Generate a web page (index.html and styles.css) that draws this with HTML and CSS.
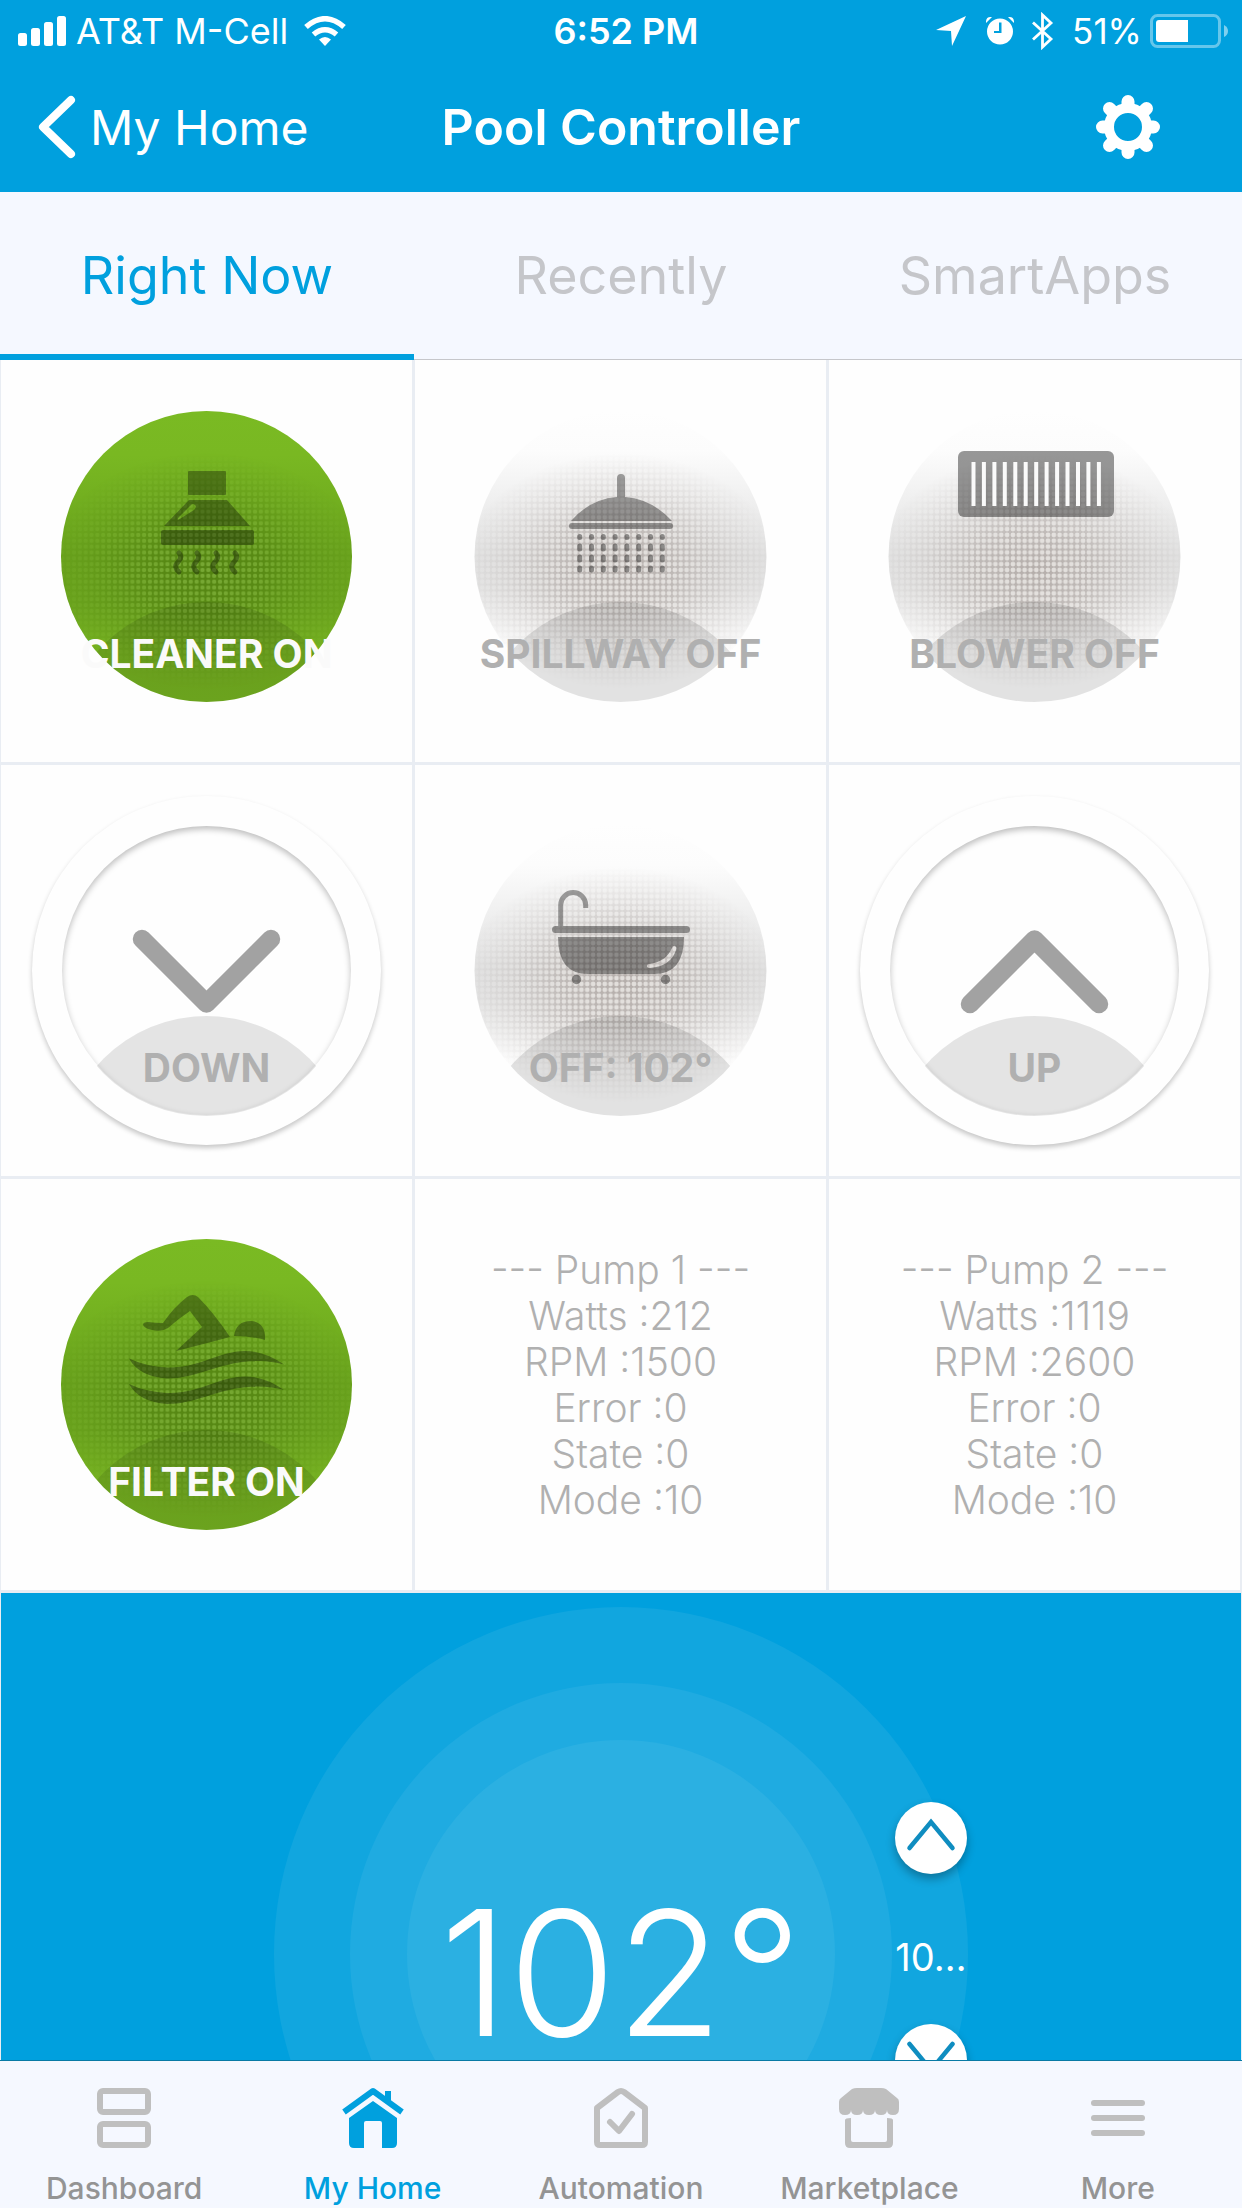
FILE: index.html
```html
<!DOCTYPE html>
<html lang="en">
<head>
<meta charset="utf-8">
<meta name="viewport" content="width=device-width, initial-scale=1">
<title>Pool Controller</title>
<link rel="stylesheet" href="styles.css">
</head>
<body>
<svg class="defs" aria-hidden="true">
  <defs>
    <linearGradient id="on-base" x1="0" y1="0" x2="0" y2="1">
      <stop offset="0" stop-color="#7aba23"/><stop offset=".15" stop-color="#79b822"/>
      <stop offset=".5" stop-color="#6aa41d"/><stop offset=".66" stop-color="#6ca61e"/><stop offset=".82" stop-color="#76b221"/>
      <stop offset="1" stop-color="#78b622"/>
    </linearGradient>
    <linearGradient id="off-base" x1="0" y1="0" x2="0" y2="1">
      <stop offset="0" stop-color="#fefefe"/><stop offset=".14" stop-color="#fcfcfc"/>
      <stop offset=".5" stop-color="#e1e1e1"/><stop offset=".6" stop-color="#e4e4e4"/><stop offset=".82" stop-color="#fefefe"/>
      <stop offset="1" stop-color="#fefefe"/>
    </linearGradient>
    <pattern id="on-dots" width="5.84" height="5.84" patternUnits="userSpaceOnUse">
      <rect width="5.84" height="5.84" fill="#4f7d10"/><circle cx="2.9" cy="2.9" r="2.2" fill="#79a838"/>
    </pattern>
    <pattern id="off-dots" width="5.84" height="5.84" patternUnits="userSpaceOnUse">
      <rect width="5.84" height="5.84" fill="#aba39f"/><circle cx="2.9" cy="2.9" r="2.4" fill="#e2deda"/>
    </pattern>
    <radialGradient id="fade" gradientUnits="userSpaceOnUse" cx="0" cy="0" r="1" gradientTransform="translate(205.5 220) scale(160 118)">
      <stop offset="0" stop-color="#fff" stop-opacity=".85"/><stop offset=".35" stop-color="#fff" stop-opacity=".65"/><stop offset=".7" stop-color="#fff" stop-opacity=".25"/><stop offset="1" stop-color="#fff" stop-opacity="0"/>
    </radialGradient>
    <mask id="dot-mask"><rect width="411" height="411" fill="url(#fade)"/></mask>
    <clipPath id="disc-clip"><circle cx="205.5" cy="205.5" r="145.5"/></clipPath>
    <g id="disc-on">
      <circle cx="205.5" cy="205.5" r="145.5" fill="url(#on-base)"/>
      <g clip-path="url(#disc-clip)">
        <rect width="411" height="411" fill="url(#on-dots)" mask="url(#dot-mask)"/>
        <circle cx="205.5" cy="396.5" r="145.5" fill="#000" opacity=".1"/>
      </g>
    </g>
    <g id="disc-off">
      <circle cx="205.5" cy="205.5" r="146" fill="url(#off-base)"/>
      <g clip-path="url(#disc-clip)">
        <rect width="411" height="411" fill="url(#off-dots)" mask="url(#dot-mask)"/>
        <circle cx="205.5" cy="396.5" r="145.5" fill="#000" opacity=".11"/>
      </g>
    </g>
  </defs>
</svg>

<div class="app">
  <header class="header">
    <div class="status">
      <div class="status-left">
        <svg width="48" height="30" viewBox="0 0 48 30" fill="#fff" aria-hidden="true"><rect y="17" width="9" height="13" rx="2.5"/><rect x="13" y="12" width="9" height="18" rx="2.5"/><rect x="26" y="6" width="9" height="24" rx="2.5"/><rect x="39" width="9" height="30" rx="2.5"/></svg>
        <span class="carrier">AT&amp;T M-Cell</span>
        <svg width="42" height="30" viewBox="0 0 42 30" aria-hidden="true"><path fill="#fff" d="M21 30l-6-6.500q6-5 12 0z"/><path fill="none" stroke="#fff" stroke-width="5.5" d="M9.500 18.500q11.500-9.500 23 0M2 11q19-16.500 38 0"/></svg>
      </div>
      <span class="time">6:52 PM</span>
      <div class="status-right">
        <svg class="arrow" width="30" height="30" viewBox="0 0 30 30" aria-hidden="true"><path fill="#fff" d="M30 0L16 30 15 15 0 14z"/></svg>
        <svg class="alarm" width="28" height="30" viewBox="0 0 28 30" aria-hidden="true"><path fill="#fff" fill-rule="evenodd" d="M14 2.500a13 13 0 1 1 0 26 13 13 0 0 1 0-26zm-1 4V15H8v2h7.500V6.500zM6 1L0 7Q-.5 0 6 1zM22 1l6 6q.5-7-6-6z"/></svg>
        <svg class="bluetooth" width="22" height="38" viewBox="0 0 22 38" aria-hidden="true"><path fill="none" stroke="#fff" stroke-width="2.800" d="M1 10.500L19 27 10.500 35V3L19 11 1 27.500"/></svg>
        <span class="percent">51%</span>
        <svg width="78" height="34" viewBox="0 0 78 34" aria-hidden="true"><rect x="1.500" y="1.500" width="68" height="31" rx="6" fill="none" stroke="#fff" stroke-opacity=".4" stroke-width="3"/><path fill="#fff" d="M9 6h29v22H9q-3 0-3-3V9q0-3 3-3z"/><path fill="#fff" fill-opacity=".5" d="M74 11q4 2 4 6t-4 6z"/></svg>
      </div>
    </div>
    <nav class="navbar">
      <a class="back" href="#home"><svg width="38" height="64" viewBox="0 0 38 64" aria-hidden="true"><path fill="none" stroke="#fff" stroke-width="8" stroke-linecap="round" stroke-linejoin="round" d="M33 5L5 32l28 27"/></svg>My Home</a>
      <h1 class="title">Pool Controller</h1>
      <button class="settings" type="button" aria-label="Settings"><svg width="64" height="64" viewBox="-32 -32 64 64" aria-hidden="true"><circle r="19" fill="none" stroke="#fff" stroke-width="10"/><g stroke="#fff" stroke-width="13" stroke-linecap="round"><path d="M0-25.500v4M0 25.500v-4M-25.500 0h4M25.500 0h-4M-18.500-18.500l3 3M18.500 18.500l-3-3M-18.500 18.500l3-3M18.500-18.500l-3 3"/></g></svg></button>
    </nav>
  </header>

  <nav class="tabs">
    <a class="tab tab-active" href="#now">Right Now</a>
    <a class="tab" href="#recently">Recently</a>
    <a class="tab" href="#smartapps">SmartApps</a>
  </nav>

  <main class="content">
    <div class="tiles">
      <button class="tile" type="button">
        <svg class="art" viewBox="0 0 411 411" aria-hidden="true"><use href="#disc-on"/>
          <g fill="#000" opacity=".32"><rect x="187" y="120" width="38" height="24" rx="1"/><path fill-rule="evenodd" d="M188 149h38l23 26h-86zm2 5l-12 12q-2 2-1 3l16-10q3-3 1-5t-4 0z"/><rect x="160" y="179" width="93" height="15" rx="2"/>
          <g fill="none" stroke="#000" stroke-width="5" stroke-linecap="round"><path d="M178 202q4 4-1 9t1 10M196 202q4 4-1 9t1 10M215 202q4 4-1 9t1 10M234 202q4 4-1 9t1 10"/></g></g></svg>
        <span class="label label-on">CLEANER ON</span>
      </button>
      <button class="tile" type="button">
        <svg class="art" viewBox="0 0 411 411" aria-hidden="true"><use href="#disc-off"/>
          <g fill="#000" opacity=".36"><path d="M202 146v-19q0-4 4-4t4 4v19q27 2 47 24H156q19-22 46-24z"/><rect x="154" y="172" width="104" height="6" rx="3"/></g>
          <g fill="none" stroke="#000" stroke-opacity=".38" stroke-width="5" stroke-linecap="round"><path d="M164.700 185.500v1M176.500 185.500v1M188.300 185.500v1M200.100 185.500v1M211.900 185.500v1M223.700 185.500v1M235.500 185.500v1M247.300 185.500v1M164.700 195v3M176.500 195v3M188.300 195v3M200.100 195v3M211.900 195v3M223.700 195v3M235.500 195v3M247.300 195v3M164.700 206v3M176.500 206v3M188.300 206v3M200.100 206v3M211.900 206v3M223.700 206v3M235.500 206v3M247.300 206v3M164.700 217v2M176.500 217v2M188.300 217v2M200.100 217v2M211.900 217v2M223.700 217v2M235.500 217v2M247.300 217v2"/></g></svg>
        <span class="label">SPILLWAY OFF</span>
      </button>
      <button class="tile" type="button">
        <svg class="art" viewBox="0 0 411 411" aria-hidden="true"><use href="#disc-off"/>
          <rect x="129" y="100" width="156" height="66" rx="6" fill="#000" opacity=".4"/>
          <path fill="none" stroke="#fafafa" stroke-width="4" d="M144.500 111v44M154.900 111v44M165.400 111v44M175.800 111v44M186.300 111v44M196.700 111v44M207.200 111v44M217.600 111v44M228.100 111v44M238.500 111v44M249 111v44M259.400 111v44M269.900 111v44"/></svg>
        <span class="label">BLOWER OFF</span>
      </button>

      <button class="tile" type="button">
        <span class="dial"><span class="well"></span></span>
        <svg class="art" viewBox="0 0 411 411" aria-hidden="true"><g clip-path="url(#disc-clip)"><circle cx="205.500" cy="396.500" r="145.500" fill="#000" opacity=".1"/></g>
          <path fill="none" stroke="#a2a2a2" stroke-width="18.500" stroke-linecap="round" stroke-linejoin="round" d="M141 174l64.500 64.500L270 174"/></svg>
        <span class="label">DOWN</span>
      </button>
      <button class="tile" type="button">
        <svg class="art" viewBox="0 0 411 411" aria-hidden="true"><use href="#disc-off"/>
          <g fill="#000" opacity=".38"><path fill-rule="evenodd" d="M143 172h126q0 37-30 37h-66q-30 0-30-37zm114 11q-6 14-23 16-2 0-2 2t3 2q21-2 26-18 1-3-1-4t-3 2z"/><rect x="137" y="161" width="138" height="7" rx="3.500"/><circle cx="161.500" cy="214.500" r="4.700"/><circle cx="250.500" cy="214.500" r="4.700"/></g>
          <path fill="none" stroke="#000" stroke-opacity=".36" stroke-width="5" d="M145.700 161v-21a12.500 12.500 0 0 1 25 0v3"/></svg>
        <span class="label">OFF: 102°</span>
      </button>
      <button class="tile" type="button">
        <span class="dial"><span class="well"></span></span>
        <svg class="art" viewBox="0 0 411 411" aria-hidden="true"><g clip-path="url(#disc-clip)"><circle cx="205.500" cy="396.500" r="145.500" fill="#000" opacity=".1"/></g>
          <path fill="none" stroke="#a2a2a2" stroke-width="18.500" stroke-linecap="round" stroke-linejoin="round" d="M141 239l64.500-64.500L270 239"/></svg>
        <span class="label">UP</span>
      </button>

      <button class="tile" type="button">
        <svg class="art" viewBox="0 0 411 411" aria-hidden="true"><use href="#disc-on"/>
          <g fill="#000" opacity=".32"><path d="M142 145q1-2 5-2 8 1 15 1 11-16 24-26 6-4 11 0 16 16 32 40-30 8-54 14l26-24-12-16q-12 8-22 17-6 4-16 2-9-2-9-6z"/><path d="M233 157q2-15 17-15 15 1 14 19-14-4-31-4z"/>
          <path id="wave" d="M128 179.500q17 8 38 9c32 1 50-16 78-16.500q20 0 39 13.500-17-5-37-3c-32 3-52 17-80 17q-28-2-38-20z"/><use href="#wave" y="25.500"/></g></svg>
        <span class="label label-on">FILTER ON</span>
      </button>
      <div class="tile readout"><p>--- Pump 1 ---<br>Watts :212<br>RPM :1500<br>Error :0<br>State :0<br>Mode :10</p></div>
      <div class="tile readout"><p>--- Pump 2 ---<br>Watts :1119<br>RPM :2600<br>Error :0<br>State :0<br>Mode :10</p></div>
    </div>

    <section class="thermostat" aria-label="Temperature">
      <div class="ring ring-outer"><div class="ring ring-middle"><div class="ring ring-inner"><span class="temperature">102°</span></div></div></div>
      <div class="setpoint">
        <button class="step" type="button" aria-label="Raise"><svg width="50" height="34" viewBox="0 0 50 34" aria-hidden="true"><path fill="none" stroke="#0f8dc0" stroke-width="4.500" stroke-linecap="round" d="M3.500 30L25 4l21.500 26"/></svg></button>
        <span class="target">10…</span>
        <button class="step" type="button" aria-label="Lower"><svg width="50" height="34" viewBox="0 0 50 34" aria-hidden="true"><path fill="none" stroke="#0f8dc0" stroke-width="4.500" stroke-linecap="round" d="M3.500 4L25 30 46.500 4"/></svg></button>
      </div>
    </section>
  </main>

  <nav class="bottom-bar">
    <a class="item" href="#dashboard"><svg width="64" height="62" viewBox="0 0 64 62" aria-hidden="true"><g fill="none" stroke="#bfbfbf" stroke-width="6"><rect x="8" y="4" width="48" height="21" rx="3"/><rect x="8" y="37" width="48" height="21" rx="3"/></g></svg>Dashboard</a>
    <a class="item item-active" href="#myhome"><svg width="64" height="62" viewBox="0 0 64 62" fill="#00a0de" aria-hidden="true"><path fill="none" stroke="#00a0de" stroke-width="6" stroke-linejoin="round" d="M3 25L32 4l29 21"/><path d="M44 4h6v12l-6-4zM32 14l24 17v25q0 5-5 5H41V36q0-2-2-2H25q-2 0-2 2v25H13q-5 0-5-5V31z"/></svg>My Home</a>
    <a class="item" href="#automation"><svg width="64" height="62" viewBox="0 0 64 62" aria-hidden="true"><g fill="none" stroke="#bfbfbf" stroke-width="6" stroke-linejoin="round"><path d="M8 21L29 5q3-2 6 0l21 16v34q0 3-3 3H11q-3 0-3-3z"/><path stroke-linecap="round" d="M21 35l9 9 13-17"/></g></svg>Automation</a>
    <a class="item" href="#marketplace"><svg width="64" height="62" viewBox="0 0 64 62" fill="#bfbfbf" aria-hidden="true"><path d="M15 2q2-1 5-1h24q3 0 5 1l11 9q2 1 2 4v7q0 6-6 6t-6-5q0 5-6 5t-6-5q0 5-6 5t-6-5q0 5-6 5t-6-5q0 5-6 5t-6-6v-7q0-3 2-4z"/><path d="M8 33q0-2 6-2v22q0 2 2 2h32q2 0 2-2V31q6 0 6 2v23q0 5-5 5H13q-5 0-5-5z"/></svg>Marketplace</a>
    <a class="item" href="#more"><svg width="64" height="62" viewBox="0 0 64 62" fill="#bfbfbf" aria-hidden="true"><rect x="5" y="13" width="54" height="6" rx="3"/><rect x="5" y="28" width="54" height="6" rx="3"/><rect x="5" y="43" width="54" height="6" rx="3"/></svg>More</a>
  </nav>
</div>
</body>
</html>
```
FILE: styles.css
```css
*,
*::before,
*::after {
  box-sizing: border-box;
}

body {
  margin: 0;
  font-family: Inter, "Liberation Sans", sans-serif;
  background: #fefefe;
}

button {
  margin: 0;
  padding: 0;
  border: 0;
  background: none;
  color: inherit;
  font: inherit;
}

a {
  color: inherit;
  text-decoration: none;
}

svg {
  display: block;
  flex: none;
}

.defs {
  position: absolute;
  width: 0;
  height: 0;
}

.app {
  display: flex;
  flex-direction: column;
  height: 100vh;
}

/* Header */

.header {
  flex: none;
  background: #00a0de;
  color: #fff;
}

.status {
  display: grid;
  grid-template-columns: 1fr auto 1fr;
  align-items: center;
  height: 62px;
  padding: 0 14px 0 18px;
  font-size: 36px;
}

.status-left,
.status-right {
  display: flex;
  align-items: center;
}

.status-right {
  justify-content: flex-end;
  font-size: 35px;
}

.carrier {
  margin: 0 16px 0 10px;
}

.time {
  padding-left: 6px;
  font-weight: 600;
}

.arrow {
  margin-right: 20px;
}

.alarm {
  margin-right: 18px;
}

.bluetooth {
  margin-right: 18px;
}

.percent {
  margin-right: 8px;
}

.navbar {
  display: grid;
  grid-template-columns: 1fr auto 1fr;
  align-items: center;
  height: 130px;
  padding: 0 38px;
  font-size: 48px;
}

.back {
  display: flex;
  align-items: center;
  gap: 14px;
}

.title {
  margin: 0;
  font-size: 50px;
  font-weight: 600;
}

.settings {
  justify-self: end;
  margin-right: 44px;
}

/* Section tabs */

.tabs {
  display: grid;
  grid-template-columns: repeat(3, 1fr);
  flex: none;
  height: 168px;
  background: #f5f8ff;
  position: relative;
  z-index: 1;
}

.tab {
  display: grid;
  place-items: center;
  border-bottom: 1px solid #c6c7cb;
  font-size: 52px;
  color: #c5c6ca;
}

.tab-active {
  border-bottom: 6px solid #00a0de;
  padding-top: 5px;
  color: #00a0de;
}

/* Device tiles */

.content {
  flex: 1;
  min-height: 0;
  overflow: hidden;
}

.tiles {
  display: grid;
  grid-template-columns: repeat(3, 1fr);
  margin-top: -10px;
}

.tile {
  display: grid;
  place-items: center;
  aspect-ratio: 1;
  border: solid #e9edf3;
  border-width: 1px 2px 2px 1px;
  background: #fefefe;
}

.tile > * {
  grid-area: 1 / 1;
}

.art {
  width: 100%;
  height: 100%;
  position: relative;
}

.label {
  align-self: end;
  position: relative;
  margin-bottom: 85px;
  font-size: 39px;
  line-height: 46px;
  font-weight: 700;
  color: #b0b0b0;
  white-space: nowrap;
}

.label-on {
  color: #fafafa;
}

.dial {
  display: grid;
  place-items: center;
  width: 85%;
  aspect-ratio: 1;
  border-radius: 50%;
  box-shadow: 0 3px 5px rgba(0, 0, 0, .22);
}

.well {
  width: 83%;
  aspect-ratio: 1;
  border-radius: 50%;
  box-shadow: inset 0 3px 6px rgba(0, 0, 0, .26);
}

.readout {
  font-size: 39px;
  line-height: 46px;
  font-weight: 300;
  text-align: center;
  color: #b0b0b0;
}

.readout p {
  margin: 0;
}

/* Thermostat */

.thermostat {
  position: relative;
  display: grid;
  place-items: center;
  aspect-ratio: 1242 / 724;
  border: 1px solid #e9edf3;
  background: #00a0de;
  color: #fff;
}

.ring {
  display: grid;
  place-items: center;
  aspect-ratio: 1;
  border-radius: 50%;
}

.ring-outer {
  width: 56%;
  background: #11a6df;
}

.ring-middle {
  width: 78%;
  background: #1fabe1;
}

.ring-inner {
  width: 79%;
  background: #2bb0e2;
}

.temperature {
  padding-top: 38px;
  font-size: 174px;
  line-height: 140px;
  font-weight: 300;
}

.setpoint {
  position: absolute;
  top: 209px;
  left: 75%;
  transform: translateX(-50%);
  display: flex;
  flex-direction: column;
  align-items: center;
  gap: 44px;
}

.step {
  display: grid;
  place-items: center;
  width: 72px;
  height: 72px;
  padding-bottom: 6px;
  border-radius: 50%;
  background: #fff;
  box-shadow: 0 5px 10px rgba(0, 0, 0, .3);
}

.target {
  padding-top: 16px;
  font-size: 38px;
  line-height: 46px;
  font-weight: 400;
}

/* Bottom navigation */

.bottom-bar {
  display: grid;
  grid-template-columns: repeat(5, 1fr);
  flex: none;
  height: 148px;
  border-top: 1px solid #087aa5;
  background: #f5f8ff;
}

.item {
  display: flex;
  flex-direction: column;
  align-items: center;
  gap: 22px;
  padding-top: 26px;
  font-size: 30px;
  line-height: 34px;
  font-weight: 500;
  color: #949494;
}

.item-active {
  color: #00a0de;
}
```
